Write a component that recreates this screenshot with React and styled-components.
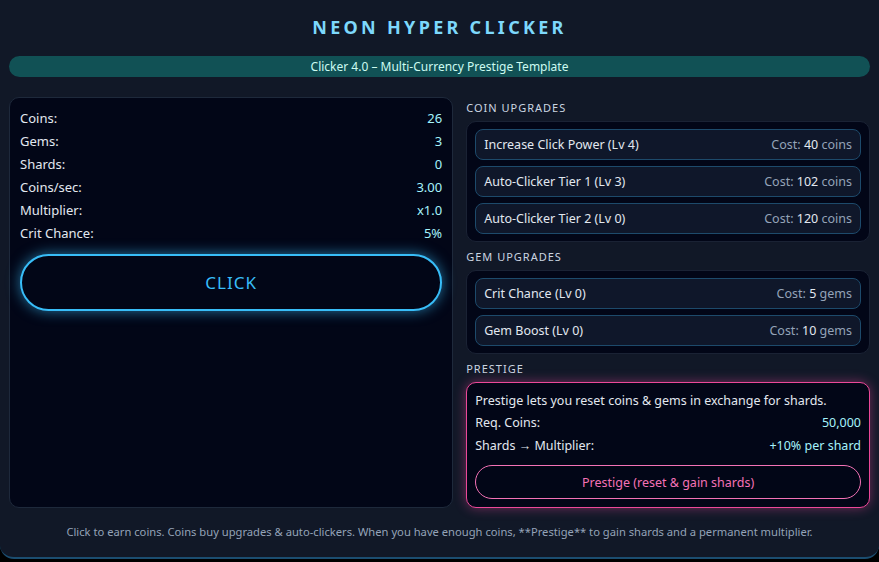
import styled, { createGlobalStyle } from "styled-components";

const GlobalStyle = createGlobalStyle`
  * { box-sizing: border-box; }
  html, body {
    margin: 0;
    padding: 0;
    background: #000;
    font-family: "Noto Sans", "Open Sans", sans-serif;
  }
`;

const coinUpgrades = [
  { name: "Increase Click Power", lv: 4, cost: 40, unit: "coins" },
  { name: "Auto-Clicker Tier 1", lv: 3, cost: 102, unit: "coins" },
  { name: "Auto-Clicker Tier 2", lv: 0, cost: 120, unit: "coins" },
];

const gemUpgrades = [
  { name: "Crit Chance", lv: 0, cost: 5, unit: "gems" },
  { name: "Gem Boost", lv: 0, cost: 10, unit: "gems" },
];

const stats = [
  ["Coins:", "26"],
  ["Gems:", "3"],
  ["Shards:", "0"],
  ["Coins/sec:", "3.00"],
  ["Multiplier:", "x1.0"],
  ["Crit Chance:", "5%"],
];

const UpgradeList = ({ items }) => (
  <Panel>
    {items.map((u) => (
      <Upgrade key={u.name}>
        <span>
          {u.name} (Lv {u.lv})
        </span>
        <Cost>
          Cost: <Amount>{u.cost}</Amount> {u.unit}
        </Cost>
      </Upgrade>
    ))}
  </Panel>
);

const App = () => {
  return (
    <>
      <GlobalStyle />
      <Shell>
        <Title>NEON HYPER CLICKER</Title>
        <Banner>Clicker 4.0 – Multi-Currency Prestige Template</Banner>
        <Grid>
          <MainCard>
            {stats.map(([label, value]) => (
              <StatRow key={label}>
                <span>{label}</span>
                <Value>{value}</Value>
              </StatRow>
            ))}
            <ClickButton>CLICK</ClickButton>
          </MainCard>
          <Side>
            <Heading>COIN UPGRADES</Heading>
            <UpgradeList items={coinUpgrades} />
            <Heading>GEM UPGRADES</Heading>
            <UpgradeList items={gemUpgrades} />
            <Heading>PRESTIGE</Heading>
            <PrestigeCard>
              <p>Prestige lets you reset coins &amp; gems in exchange for shards.</p>
              <InfoRow>
                <span>Req. Coins:</span>
                <Value>50,000</Value>
              </InfoRow>
              <InfoRow>
                <span>Shards → Multiplier:</span>
                <Value>+10% per shard</Value>
              </InfoRow>
              <PrestigeButton>Prestige (reset &amp; gain shards)</PrestigeButton>
            </PrestigeCard>
          </Side>
        </Grid>
        <Footer>
          Click to earn coins. Coins buy upgrades &amp; auto-clickers. When you have enough coins,
          **Prestige** to gain shards and a permanent multiplier.
        </Footer>
      </Shell>
    </>
  );
};

const Shell = styled.div`
  height: 559px;
  background: #111827;
  border-bottom: 2px solid #1b4d70;
  border-radius: 0 0 14px 14px;
  padding: 0 9px;
  display: flex;
  flex-direction: column;
`;

const Title = styled.h1`
  margin: 0;
  padding-top: 15px;
  height: 56px;
  text-align: center;
  font-size: 18px;
  font-weight: 700;
  letter-spacing: 3.3px;
  color: #7dd8fc;
`;

const Banner = styled.div`
  height: 21px;
  border-radius: 999px;
  background: #115155;
  color: #ccfbf1;
  font-size: 12px;
  line-height: 21px;
  text-align: center;
`;

const Grid = styled.div`
  margin-top: 20px;
  display: grid;
  grid-template-columns: 1.1fr 1fr;
  gap: 13px;
  height: 411px;
`;

const MainCard = styled.div`
  background: #020617;
  border: 1px solid #1e293b;
  border-radius: 10px;
  padding: 9px 10px;
  display: flex;
  flex-direction: column;
`;

const StatRow = styled.div`
  display: flex;
  justify-content: space-between;
  height: 23px;
  line-height: 23px;
  font-size: 13px;
  color: #e2e8f0;
`;

const Value = styled.span`
  color: #a5f3fc;
`;

const ClickButton = styled.button`
  margin-top: 9px;
  height: 57px;
  width: 100%;
  border-radius: 999px;
  border: 2px solid #38bdf8;
  background: #020617;
  color: #38bdf8;
  font-family: inherit;
  font-size: 17px;
  letter-spacing: 1px;
  box-shadow: 0 0 14px rgba(56, 189, 248, 0.6);
`;

const Side = styled.div`
  display: flex;
  flex-direction: column;
  min-height: 0;
`;

const Heading = styled.div`
  font-size: 11px;
  letter-spacing: 1px;
  color: #cbd5e1;
  height: 24px;
  line-height: 22px;
  &:not(:first-child) {
    margin-top: 4px;
  }
`;

const Panel = styled.div`
  background: #020617;
  border: 1px solid #1a2234;
  border-radius: 10px;
  padding: 7px 8px;
  display: flex;
  flex-direction: column;
  gap: 6px;
`;

const Upgrade = styled.div`
  height: 31px;
  padding: 0 8px;
  display: flex;
  align-items: center;
  justify-content: space-between;
  background: #0f172a;
  border: 1px solid #1d4a6b;
  border-radius: 8px;
  font-size: 12.5px;
  color: #e2e8f0;
`;

const Cost = styled.span`
  color: #94a3b8;
`;

const Amount = styled.span`
  color: #e2e8f0;
`;

const PrestigeCard = styled.div`
  flex: 1;
  min-height: 0;
  background: #020617;
  border: 1px solid #ec4899;
  border-radius: 10px;
  padding: 8px 8px 7px;
  box-shadow: 0 0 12px rgba(236, 72, 153, 0.45);
  font-size: 12.5px;
  color: #e2e8f0;
  display: flex;
  flex-direction: column;
  p {
    margin: 0;
    height: 20px;
    line-height: 20px;
  }
`;

const InfoRow = styled.div`
  display: flex;
  justify-content: space-between;
  height: 23px;
  line-height: 23px;
`;

const PrestigeButton = styled.button`
  margin-top: 8px;
  height: 34px;
  border-radius: 999px;
  border: 1px solid #f472b6;
  background: #020617;
  color: #f472b6;
  font-family: inherit;
  font-size: 12.5px;
`;

const Footer = styled.div`
  margin-top: 16px;
  text-align: center;
  font-size: 11.2px;
  color: #94a3b8;
`;

export default App;
